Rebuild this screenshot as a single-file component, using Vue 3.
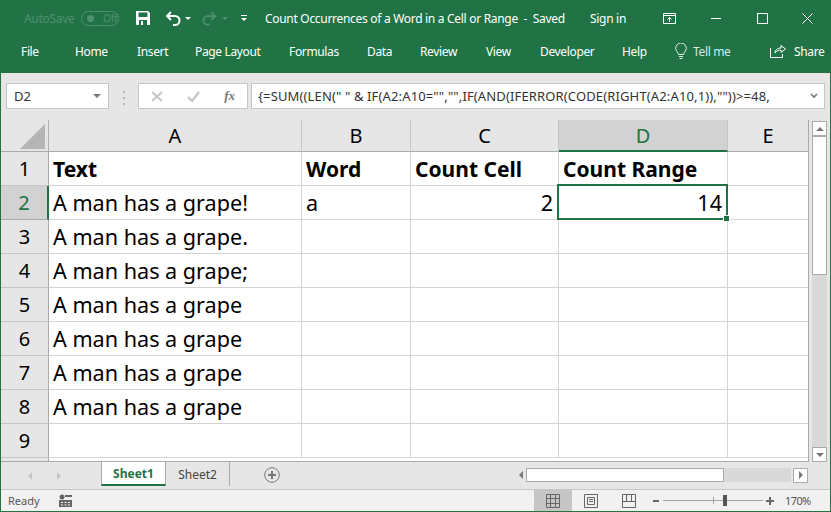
<script setup>
const tabs = ['File', 'Home', 'Insert', 'Page Layout', 'Formulas', 'Data', 'Review', 'View', 'Developer', 'Help']
const columns = [
  { key: 'A', cls: 'col-a' },
  { key: 'B', cls: 'col-b' },
  { key: 'C', cls: 'col-c' },
  { key: 'D', cls: 'col-d', active: true },
  { key: 'E', cls: 'col-e' },
]
const grape = 'A man has a grape'
const rows = [
  { id: 1, cells: ['Text', 'Word', 'Count Cell', 'Count Range', ''], bold: true },
  { id: 2, cells: ['A man has a grape!', 'a', '2', '14', ''], active: true },
  { id: 3, cells: [grape + '.', '', '', '', ''] },
  { id: 4, cells: [grape + ';', '', '', '', ''] },
  { id: 5, cells: [grape, '', '', '', ''] },
  { id: 6, cells: [grape, '', '', '', ''] },
  { id: 7, cells: [grape, '', '', '', ''] },
  { id: 8, cells: [grape, '', '', '', ''] },
  { id: 9, cells: ['', '', '', '', ''] },
]
const isNumber = (value) => value !== '' && !isNaN(value)
</script>

<template>
  <div class="window">
    <!-- Title bar -->
    <header class="title-bar">
      <span class="autosave">AutoSave</span>
      <span class="toggle"><i></i>Off</span>
      <svg class="qa-save" width="16" height="16" viewBox="0 0 16 16">
        <path d="M1 1h12l2 2v12H1z" fill="#fff" />
        <rect x="3.5" y="2.5" width="9" height="4.5" fill="#217346" />
        <rect x="4" y="10" width="8" height="5" fill="#217346" />
        <rect x="6" y="11" width="2" height="4" fill="#fff" />
      </svg>
      <svg class="qa-undo" width="17" height="15" viewBox="0 0 17 15" fill="none">
        <path d="M6 1 2 5l4 4" stroke="#fff" stroke-width="2" />
        <path d="M2 5h8a4.5 4.5 0 0 1 0 9H8" stroke="#fff" stroke-width="2" />
      </svg>
      <span class="caret"></span>
      <svg class="qa-redo" width="16" height="15" viewBox="0 0 17 15" fill="none">
        <path d="M11 1l4 4-4 4" stroke="#4f9070" stroke-width="2" />
        <path d="M15 5H7a4.5 4.5 0 0 0 0 9h2" stroke="#4f9070" stroke-width="2" />
      </svg>
      <span class="caret dim"></span>
      <span class="qa-more"><b></b><span class="caret"></span></span>
      <span class="doc-title">Count Occurrences of a Word in a Cell or Range&nbsp; -&nbsp; Saved</span>
      <span class="sign-in">Sign in</span>
      <svg class="win-ribbon" width="13" height="11" viewBox="0 0 13 11" fill="none" stroke="#fff">
        <path d="M.5.5h12v10H.5zM.5 2.5h12M6.5 9V4.5M4.5 6.5l2-2 2 2" />
      </svg>
      <span class="win-min"></span>
      <span class="win-max"></span>
      <svg class="win-close" width="11" height="11" viewBox="0 0 11 11" stroke="#fff" stroke-width="1">
        <path d="M.5.5l10 10M10.5.5l-10 10" />
      </svg>
    </header>

    <!-- Ribbon tabs -->
    <nav class="ribbon">
      <span v-for="tab in tabs" :key="tab">{{ tab }}</span>
      <span class="tell-me">
        <svg width="12" height="17" viewBox="0 0 12 17" fill="none" stroke="#e4efe9">
          <path d="M3.5 11.5C3 9 .7 8 .7 5.3a5.3 5.3 0 0 1 10.6 0C11.300 8 9 9 8.500 11.500zM4 13.500h4M4.500 15.500h3" />
        </svg>
        Tell me
      </span>
      <span class="share">
        <svg width="16" height="14" viewBox="0 0 16 14" fill="none" stroke="#fff">
          <path d="M.5 4v9.500h12V10M5 9c0-3 2.500-5 6-5V1.500L15.500 5 11 8.500V6C8.500 6 6.500 7 5 9z" />
        </svg>
        Share
      </span>
    </nav>

    <!-- Formula bar -->
    <section class="formula-bar">
      <div class="name-box">D2<span class="gray-caret"></span></div>
      <span class="grip"></span>
      <div class="fx-box">
        <svg width="12" height="11" viewBox="0 0 12 11" stroke="#c6c6c6" stroke-width="2">
          <path d="M1 1l10 9M11 1L1 10" />
        </svg>
        <svg width="13" height="11" viewBox="0 0 13 11" fill="none" stroke="#c6c6c6" stroke-width="2.400">
          <path d="M1 6l4 4 7-9" />
        </svg>
        <em>fx</em>
      </div>
      <div class="formula-input">
        <span>{=SUM((LEN(" " &amp; IF(A2:A10="","",IF(AND(IFERROR(CODE(RIGHT(A2:A10,1)),""))&gt;=48,</span>
        <svg width="8" height="6" viewBox="0 0 8 6" fill="none" stroke="#777" stroke-width="1.600">
          <path d="M1 1l3 3 3-3" />
        </svg>
      </div>
    </section>

    <!-- Sheet area -->
    <section class="sheet-area">
      <div class="grid-wrap">
        <div class="head-row">
          <div class="corner"><i></i></div>
          <div v-for="col in columns" :key="col.key" class="col-head" :class="[col.cls, { active: col.active }]">
            {{ col.key }}
          </div>
        </div>
        <div v-for="row in rows" :key="row.id" class="row">
          <div class="row-head" :class="{ active: row.active }">{{ row.id }}</div>
          <div
            v-for="(col, i) in columns"
            :key="col.key"
            class="cell"
            :class="[col.cls, { bold: row.bold, num: isNumber(row.cells[i]) }]"
          >
            {{ row.cells[i] }}
          </div>
        </div>
        <div class="row-cut">
          <div class="row-head"></div>
        </div>
        <div class="selection"><i></i></div>
      </div>
      <aside class="v-scroll">
        <div class="v-btn"><span class="up"></span></div>
        <div class="v-thumb"></div>
        <div class="v-track"></div>
        <div class="v-btn"><span class="down"></span></div>
      </aside>
    </section>

    <!-- Sheet tabs -->
    <section class="tabs-bar">
      <span class="tab-arrow left"></span>
      <span class="tab-arrow right"></span>
      <div class="sheet-tab current">Sheet1</div>
      <div class="sheet-tab">Sheet2</div>
      <span class="add-sheet">
        <svg width="16" height="16" viewBox="0 0 16 16" fill="none" stroke="#777">
          <circle cx="8" cy="8" r="7.300" />
          <path d="M8 4v8M4 8h8" stroke-width="2" />
        </svg>
      </span>
      <div class="h-scroll">
        <span class="h-arrow left"></span>
        <div class="h-thumb"></div>
        <div class="h-track"></div>
        <div class="h-btn"><span class="h-arrow right"></span></div>
      </div>
    </section>

    <!-- Status bar -->
    <footer class="status-bar">
      <span class="ready">Ready</span>
      <svg class="macro" width="13" height="13" viewBox="0 0 13 13" fill="#666">
        <circle cx="3" cy="3" r="2.500" />
        <path d="M6 1h7v2H6zM0 6h13v7H0z" />
        <path d="M2 8h2v1H2zM5.500 8h2v1h-2zM9 8h2v1H9zM2 10.500h2v1H2zM5.500 10.500h2v1h-2zM9 10.500h2v1H9z" fill="#f1f1f1" />
      </svg>
      <span class="view-btn on">
        <svg width="14" height="14" viewBox="0 0 14 14" fill="none" stroke="#666">
          <path d="M.5.500h13v13H.5zM4.500.500v13M9.500.500v13M.5 4.500h13M.5 9.500h13" />
        </svg>
      </span>
      <span class="view-btn">
        <svg width="14" height="14" viewBox="0 0 14 14" fill="none" stroke="#666">
          <path d="M.5.500h13v13H.5zM3.500 3.500h7v7h-7zM5 5.500h4M5 7.500h4" />
        </svg>
      </span>
      <span class="view-btn">
        <svg width="14" height="14" viewBox="0 0 14 14" fill="none" stroke="#666">
          <path d="M.5.500h13v13H.5zM.5 7.500h13M4.500.500v7M9.500.500v7" />
        </svg>
      </span>
      <span class="zoom-minus"></span>
      <div class="slider"><i class="tick"></i><i class="knob"></i></div>
      <span class="zoom-plus"></span>
      <span class="zoom-value">170%</span>
    </footer>
  </div>
</template>

<style>
html,
body {
  margin: 0;
  overflow: hidden;
}
</style>

<style scoped>
.window {
  width: 831px;
  height: 512px;
  box-sizing: border-box;
  display: flex;
  flex-direction: column;
  overflow: hidden;
  background: #e6e6e6;
  border: solid #217346;
  border-width: 0 1px 1px;
  font-family: 'Noto Sans', 'Open Sans', sans-serif;
}

/* Title bar */
.title-bar {
  height: 36px;
  margin: 0 -1px;
  display: flex;
  align-items: center;
  background: #217346;
  color: #fff;
  font-size: 12px;
  letter-spacing: -0.3px;
  flex: none;
}
.autosave {
  margin-left: 24px;
  width: 57px;
  color: #4f9070;
}
.toggle {
  width: 38px;
  height: 15px;
  box-sizing: border-box;
  border: 1px solid #4f9070;
  border-radius: 8px;
  display: flex;
  align-items: center;
  color: #4f9070;
  font-size: 10.500px;
}
.toggle i {
  width: 7px;
  height: 7px;
  border-radius: 50%;
  background: #4f9070;
  margin: 0 9px 0 5px;
}
.qa-save {
  margin-left: 16px;
}
.qa-undo {
  margin-left: 14px;
}
.caret {
  display: block;
  width: 0;
  height: 0;
  margin-left: 3px;
  border: solid transparent;
  border-width: 3px 3px 0;
  border-top-color: #fff;
}
.caret.dim {
  margin-left: 5px;
  border-top-color: #4f9070;
}
.qa-redo {
  margin-left: 10px;
}
.qa-more {
  margin-left: 13px;
  width: 6px;
}
.qa-more b {
  display: block;
  width: 6px;
  height: 1px;
  margin-bottom: 2px;
  background: #fff;
}
.qa-more .caret {
  margin-left: 0;
}
.doc-title {
  margin-left: 18px;
  width: 325px;
  white-space: nowrap;
}
.sign-in {
  width: 72px;
}
.win-ribbon {
  margin-left: 1px;
}
.win-min {
  width: 10px;
  height: 1px;
  margin-left: 35px;
  background: #fff;
}
.win-max {
  width: 9px;
  height: 9px;
  margin-left: 36px;
  border: 1px solid #fff;
}
.win-close {
  margin-left: 34px;
}

/* Ribbon tabs */
.ribbon {
  height: 37px;
  margin: 0 -1px;
  padding: 0 0 7px 21px;
  display: grid;
  grid-template-columns: 54px 62px 58px 94px 78px 53px 66px 54px 82px 53px 95px auto;
  align-items: center;
  background: #217346;
  color: #fff;
  font-size: 12px;
  letter-spacing: -0.35px;
  flex: none;
  box-sizing: border-box;
}
.tell-me,
.share {
  display: flex;
  align-items: center;
  gap: 6px;
}
.tell-me {
  color: #dce9e2;
}
.share {
  gap: 8px;
}

/* Formula bar */
.formula-bar {
  height: 47px;
  flex: none;
  display: flex;
  align-items: flex-start;
  padding: 10px 0 0 5px;
  box-sizing: border-box;
}
.name-box,
.fx-box,
.formula-input {
  height: 26px;
  box-sizing: border-box;
  background: #fff;
  border: 1px solid #c6c6c6;
  font-size: 13px;
  display: flex;
  align-items: center;
  color: #333;
}
.name-box {
  width: 103px;
  padding: 0 7px;
  justify-content: space-between;
}
.gray-caret {
  border: solid transparent;
  border-width: 4px 4px 0;
  border-top-color: #777;
}
.grip {
  width: 2px;
  height: 10px;
  margin: 8px 13px 0 14px;
  border-top: 2px solid #b5b5b5;
  border-bottom: 2px solid #b5b5b5;
  background: linear-gradient(#b5b5b5, #b5b5b5) center / 2px 2px no-repeat;
}
.fx-box {
  width: 110px;
  padding: 0 12px;
  justify-content: space-between;
}
.fx-box em {
  font-family: 'Liberation Serif', serif;
  font-weight: bold;
  font-size: 13px;
  color: #777;
}
.formula-input {
  width: 574px;
  margin-left: 3px;
  padding: 0 6px 0 6px;
  justify-content: space-between;
  white-space: nowrap;
  letter-spacing: 0.14px;
}

/* Sheet */
.sheet-area {
  height: 342px;
  flex: none;
  display: flex;
  overflow: hidden;
}
.grid-wrap {
  position: relative;
  width: 808px;
  background: #fff;
  overflow: hidden;
  box-sizing: border-box;
  border-right: 1px solid #ababab;
  border-bottom: 1px solid #ababab;
}
.head-row,
.row {
  display: flex;
}
.head-row {
  height: 32px;
  background: #e6e6e6;
}
.corner {
  width: 48px;
  flex: none;
  box-sizing: border-box;
  border-right: 1px solid #b1b1b1;
  border-bottom: 1px solid #ababab;
  padding: 4px 3px 6px 0;
  display: flex;
  justify-content: flex-end;
}
.corner i {
  width: 25px;
  height: 25px;
  background: #b5b5b5;
  clip-path: polygon(100% 0, 100% 100%, 0 100%);
}
.col-head {
  box-sizing: border-box;
  flex: none;
  border-right: 1px solid #c6c6c6;
  border-bottom: 1px solid #ababab;
  display: flex;
  align-items: center;
  justify-content: center;
  font-size: 20px;
  color: #000;
}
.col-head.active {
  background: #d2d2d2;
  color: #217346;
  border-bottom: 2px solid #217346;
}
.col-a {
  width: 253px;
}
.col-b {
  width: 109px;
}
.col-c {
  width: 148px;
}
.col-d {
  width: 169px;
}
.col-e {
  width: 81px;
}
.row {
  height: 34px;
}
.row-head {
  width: 48px;
  flex: none;
  box-sizing: border-box;
  background: #e6e6e6;
  border-right: 1px solid #ababab;
  border-bottom: 1px solid #c6c6c6;
  display: flex;
  align-items: center;
  justify-content: center;
  font-size: 20px;
  color: #000;
}
.row-head.active {
  background: #d2d2d2;
  color: #217346;
  border-right: 2px solid #217346;
  border-bottom-color: #ababab;
}
.cell {
  flex: none;
  box-sizing: border-box;
  border-right: 1px solid #d4d4d4;
  border-bottom: 1px solid #d4d4d4;
  padding: 0 5px 0 4px;
  display: flex;
  align-items: center;
  font-size: 21.600px;
  color: #000;
  white-space: nowrap;
}
.cell.bold {
  font-size: 21px;
  font-weight: 700;
}
.cell.num {
  justify-content: flex-end;
}
.row-cut {
  height: 4px;
}
.row-cut .row-head {
  height: 4px;
  border-bottom: 0;
}
.selection {
  position: absolute;
  left: 556px;
  top: 64px;
  width: 171px;
  height: 36px;
  box-sizing: border-box;
  border: 2px solid #217346;
}
.selection i {
  position: absolute;
  right: -4px;
  bottom: -4px;
  width: 5px;
  height: 5px;
  background: #217346;
  border: 1px solid #fff;
}
.v-scroll {
  width: 21px;
  flex: none;
  box-sizing: border-box;
  padding: 1px 3px 0 3px;
  display: flex;
  flex-direction: column;
}
.v-btn {
  height: 15px;
  flex: none;
  box-sizing: border-box;
  background: #fff;
  border: 1px solid #ababab;
  display: flex;
  align-items: center;
  justify-content: center;
}
.up {
  border: solid transparent;
  border-width: 0 4px 4px;
  border-bottom-color: #777;
}
.down {
  border: solid transparent;
  border-width: 4px 4px 0;
  border-top-color: #777;
}
.v-thumb {
  height: 139px;
  flex: none;
  box-sizing: border-box;
  background: #fff;
  border: 1px solid #ababab;
}
.v-track {
  flex: 1;
  background: #d9d9d9;
}

/* Sheet tabs */
.tabs-bar {
  height: 27px;
  flex: none;
  display: flex;
  align-items: flex-start;
  font-size: 12px;
}
.tab-arrow {
  margin-top: 10px;
  border: solid transparent;
  border-width: 4px 0;
}
.tab-arrow.left {
  margin-left: 27px;
  border-right: 4px solid #c6c6c6;
}
.tab-arrow.right {
  margin-left: 25px;
  border-left: 4px solid #c6c6c6;
}
.sheet-tab {
  width: 64px;
  height: 24px;
  box-sizing: border-box;
  display: flex;
  align-items: center;
  justify-content: center;
  border-right: 1px solid #ababab;
  color: #444;
}
.sheet-tab.current {
  width: 65px;
  margin-left: 40px;
  background: #fff;
  color: #217346;
  font-weight: 700;
  border-left: 1px solid #ababab;
  border-right: 1px solid #ababab;
  border-bottom: 2px solid #217346;
}
.add-sheet {
  margin: 5px 0 0 34px;
  height: 16px;
}
.h-scroll {
  margin: 6px 0 0 239px;
  display: flex;
  align-items: center;
  height: 14px;
}
.h-arrow {
  display: block;
  border: solid transparent;
  border-width: 4px 0;
}
.h-arrow.left {
  border-right: 4px solid #777;
  margin-right: 3px;
}
.h-arrow.right {
  border-left: 4px solid #777;
}
.h-thumb {
  width: 198px;
  height: 14px;
  box-sizing: border-box;
  background: #fff;
  border: 1px solid #ababab;
}
.h-track {
  width: 67px;
  height: 14px;
  background: #d9d9d9;
}
.h-btn {
  width: 15px;
  height: 15px;
  margin-left: 2px;
  box-sizing: border-box;
  background: #fff;
  border: 1px solid #ababab;
  display: flex;
  align-items: center;
  justify-content: center;
}

/* Status bar */
.status-bar {
  flex: 1;
  display: flex;
  align-items: center;
  background: #f1f1f1;
  border-top: 1px solid #c6c6c6;
  font-size: 11px;
  color: #555;
}
.ready {
  margin-left: 7px;
  width: 51px;
}
.macro {
  margin-right: 462px;
}
.view-btn {
  width: 38px;
  height: 100%;
  display: flex;
  align-items: center;
  justify-content: center;
}
.view-btn.on {
  background: #c6c6c6;
}
.zoom-minus {
  width: 6px;
  height: 2px;
  margin-left: 5px;
  background: #666;
}
.slider {
  position: relative;
  width: 100px;
  height: 1px;
  margin-left: 4px;
  background: #a6a6a6;
}
.tick {
  position: absolute;
  left: 50px;
  top: -3px;
  width: 1px;
  height: 7px;
  background: #a6a6a6;
}
.knob {
  position: absolute;
  left: 60px;
  top: -5px;
  width: 4px;
  height: 11px;
  background: #555;
}
.zoom-plus {
  width: 8px;
  height: 2px;
  margin-left: 3px;
  background: #666;
  position: relative;
}
.zoom-plus::after {
  content: '';
  position: absolute;
  left: 3px;
  top: -3px;
  width: 2px;
  height: 8px;
  background: #666;
}
.zoom-value {
  margin-left: 11px;
  letter-spacing: -0.6px;
}
</style>
